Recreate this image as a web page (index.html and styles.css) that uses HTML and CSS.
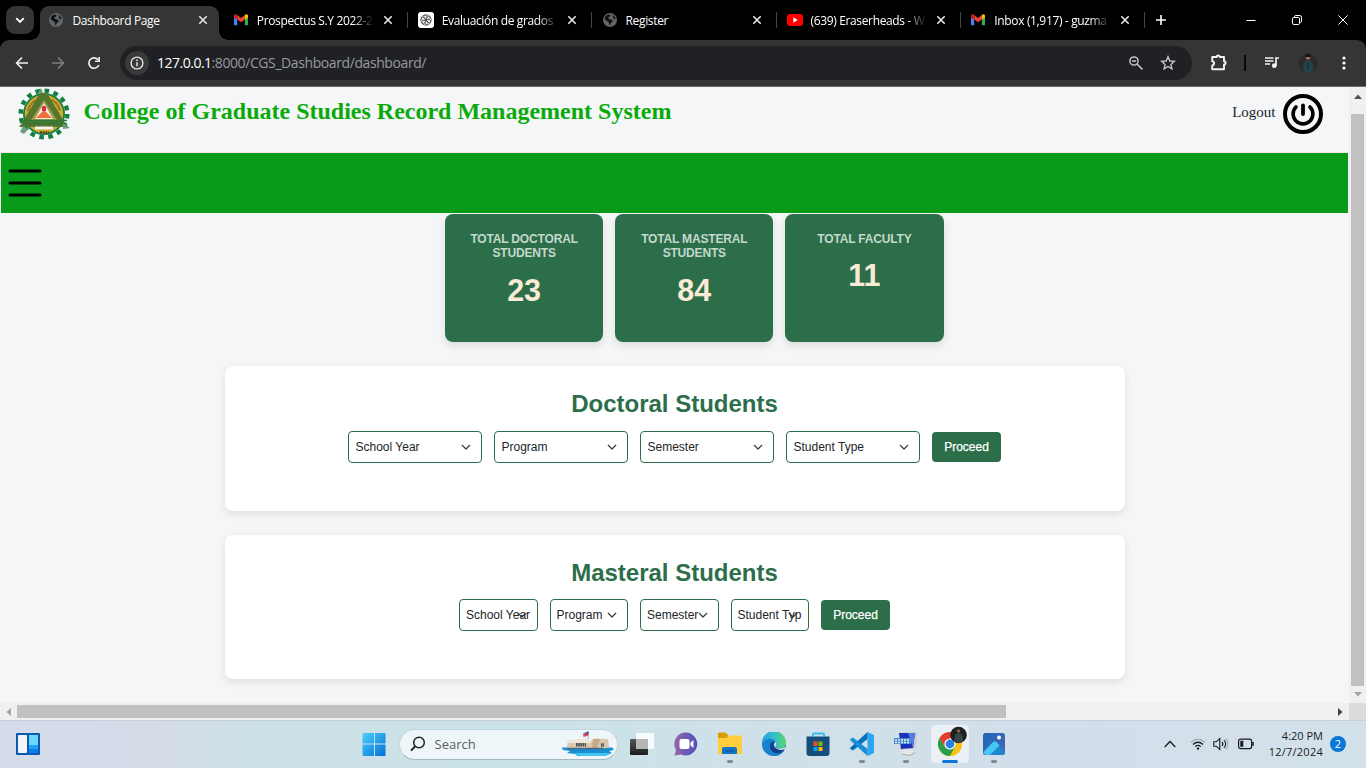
FILE: index.html
```html
<!DOCTYPE html>
<html lang="en">
<head>
<meta charset="utf-8">
<title>Dashboard Page</title>
<link rel="stylesheet" href="styles.css">
</head>
<body>
<svg class="defs" width="0" height="0">
  <defs>
    <symbol id="i-x" viewBox="0 0 10 10"><path d="M1.3 1.3l7.4 7.4M8.7 1.3L1.3 8.7" fill="none" stroke="#e8e8e8" stroke-width="1.6"/></symbol>
    <symbol id="i-gmail" viewBox="0 0 14 12"><path d="M0 2v9.2h3.2V4.5L0 2z" fill="#4285f4"/><path d="M14 2v9.2h-3.2V4.5L14 2z" fill="#34a853"/><path d="M3.2 1v4.5L7 8.3l3.8-2.8V1L7 3.9z" fill="#ea4335"/><path d="M0 1.8v1.7l3.2 2.2V1.2L2.4.6C1.400 0 0 .6 0 1.800z" fill="#c5221f"/><path d="M14 1.800v1.700l-3.200 2.200V1.200l.8-.6c1-.6 2.400 0 2.400 1.200z" fill="#fbbc04"/></symbol>
    <symbol id="i-globe" viewBox="0 0 14 14"><circle cx="7" cy="7" r="7" fill="#61656a"/><path d="M2 4.200C3 2.500 4.500 1.700 6 1.500l1.500.7-.7 1.600-2 .7 1.700 1.700 2.500.5.800 1.600-2.200 1.900-.6 2.200c-1-.4-1-1.700-.9-2.900L3.500 7.500 1.800 6.300zM9.200 1.900c1.800.6 3.200 2.300 3.300 4.200l-1.200.2-1.400-1.200.3-1.200z" fill="#111"/></symbol>
    <symbol id="i-chev" viewBox="0 0 10 10"><path d="M1.200 3.300L5 7l3.800-3.700" fill="none" stroke="#343a40" stroke-width="1.200" stroke-linecap="round" stroke-linejoin="round"/></symbol>
  </defs>
</svg>
<div class="screen">
  <div class="tabstrip">
    <div class="tabsearch"><svg width="12" height="12" viewBox="0 0 12 12"><path d="M2.200 4.200L6 8l3.800-3.800" fill="none" stroke="#fff" stroke-width="1.800"/></svg></div>
    <div class="tab active"><svg class="fav" width="14" height="14"><use href="#i-globe"/></svg><span class="tabname">Dashboard Page</span><svg width="10" height="10"><use href="#i-x"/></svg></div>
    <div class="tab"><svg class="fav" width="14" height="12"><use href="#i-gmail"/></svg><span class="tabname fade">Prospectus S.Y 2022-2</span><svg width="10" height="10"><use href="#i-x"/></svg><i class="sep"></i></div>
    <div class="tab"><svg class="fav" width="16" height="16" viewBox="0 0 16 16"><rect width="16" height="16" rx="3" fill="#fff"/><g fill="none" stroke="#444" stroke-width=".7"><ellipse cx="8" cy="5.200" rx="3.200" ry="2.500" transform="rotate(20 8 8)"/><ellipse cx="8" cy="5.200" rx="3.200" ry="2.500" transform="rotate(80 8 8)"/><ellipse cx="8" cy="5.200" rx="3.200" ry="2.500" transform="rotate(140 8 8)"/><ellipse cx="8" cy="5.200" rx="3.200" ry="2.500" transform="rotate(200 8 8)"/><ellipse cx="8" cy="5.200" rx="3.200" ry="2.500" transform="rotate(260 8 8)"/><ellipse cx="8" cy="5.200" rx="3.200" ry="2.500" transform="rotate(320 8 8)"/></g></svg><span class="tabname fade">Evaluación de grados</span><svg width="10" height="10"><use href="#i-x"/></svg><i class="sep"></i></div>
    <div class="tab"><svg class="fav" width="14" height="14"><use href="#i-globe"/></svg><span class="tabname">Register</span><svg width="10" height="10"><use href="#i-x"/></svg><i class="sep"></i></div>
    <div class="tab"><svg class="fav" width="16" height="12" viewBox="0 0 16 12"><rect width="16" height="12" rx="3" fill="#f00"/><path d="M6.300 3.300v5.400L10.700 6z" fill="#fff"/></svg><span class="tabname fade">(639) Eraserheads - W</span><svg width="10" height="10"><use href="#i-x"/></svg><i class="sep"></i></div>
    <div class="tab"><svg class="fav" width="14" height="12"><use href="#i-gmail"/></svg><span class="tabname fade">Inbox (1,917) - guzma</span><svg width="10" height="10"><use href="#i-x"/></svg><i class="sep"></i></div>
    <svg class="plus" width="12" height="12" viewBox="0 0 12 12"><path d="M6 1v10M1 6h10" stroke="#fff" stroke-width="1.600"/></svg>
    <div class="winbtns">
      <svg width="10" height="10" viewBox="0 0 10 10"><path d="M.5 5.500h9" stroke="#fff"/></svg>
      <svg width="10" height="10" viewBox="0 0 10 10"><rect x=".5" y="2.500" width="7" height="7" rx="1.300" fill="none" stroke="#fff"/><path d="M2.500 2V1.800Q2.500.5 3.800.5h4Q9.500.5 9.500 2.200v4Q9.500 7.500 8.200 7.500H8" fill="none" stroke="#fff"/></svg>
      <svg width="10" height="10" viewBox="0 0 10 10"><path d="M.4.4l9.200 9.200M9.600.4L.4 9.600" stroke="#fff"/></svg>
    </div>
  </div>
  <div class="toolbar">
    <svg width="36" height="16" viewBox="-18 -8 36 16"><path d="M6 0H-5M0-5.500L-5.400 0 0 5.500" fill="none" stroke="#f0f0f0" stroke-width="1.600"/></svg>
    <svg width="36" height="16" viewBox="-18 -8 36 16"><path d="M-6 0H5M0-5.500L5.400 0 0 5.500" fill="none" stroke="#7d7d7d" stroke-width="1.600"/></svg>
    <svg width="36" height="16" viewBox="-18 -8 36 16"><path d="M4.900 2A5.200 5.200 0 1 1 4.300-3" fill="none" stroke="#f0f0f0" stroke-width="1.700"/><path d="M6-6v5H1V-2.400L4.400-2.400V-6z" fill="#f0f0f0"/></svg>
    <div class="omnibox">
      <span class="info"><svg width="14" height="14" viewBox="0 0 14 14"><circle cx="7" cy="7" r="5.900" fill="none" stroke="#e3e3e3" stroke-width="1.400"/><path d="M7 6.300v4M7 3.600v1.500" stroke="#e3e3e3" stroke-width="1.500"/></svg></span>
      <span class="url"><b>127.0.0.1</b>:8000/CGS_Dashboard/dashboard/</span>
      <svg width="32" height="16" viewBox="-16 -8 32 16"><g fill="none" stroke="#c4c6ca" stroke-width="1.500"><circle cx="-2" cy="-2" r="4.100"/><path d="M1 1l5.400 5.400M-4-2h4"/></g></svg>
      <svg width="32" height="16" viewBox="-16 -8 32 16"><path d="M0-6.200L1.800-2 6.300-1.600 2.900 1.400 3.900 5.900 0 3.500-3.900 5.900-2.900 1.400-6.300-1.600-1.800-2z" fill="none" stroke="#c4c6ca" stroke-width="1.400"/></svg>
    </div>
    <svg class="puzzle" width="18" height="18" viewBox="-9 -9 18 18"><path d="M-6.800-6H-2.300A1.500 1.500 0 0 1 .7-6H5V-1.700A1.500 1.500 0 0 1 5 1.500V6.300H-6.800V2.500C-4.300 2.300-4.300-1.600-6.800-1.800z" fill="none" stroke="#f2f2f2" stroke-width="1.900" stroke-linejoin="round"/></svg>
    <i class="tdiv"></i>
    <svg class="list" width="16" height="14" viewBox="0 0 16 14"><path d="M1 2h8.500M1 5h8.500M1 8h5M12 9.500V2h3" fill="none" stroke="#f2f2f2" stroke-width="1.700"/><circle cx="10.300" cy="9.700" r="2.400" fill="#f2f2f2"/></svg>
    <svg class="me" width="20" height="20" viewBox="0 0 20 20"><circle cx="10" cy="10" r="9.500" fill="#292a2c"/><path d="M5 17l.5-6q1-3 4.500-3.500 4 .5 4.600 3.500l.6 6-3 3h-4z" fill="#25434b"/><circle cx="10" cy="4.500" r="2.300" fill="#a06d5c"/><path d="M7.300 4q.2-3 2.700-3t2.700 3z" fill="#111"/><path d="M10 9v7" stroke="#122027"/></svg>
    <svg class="dots" width="4" height="14" viewBox="0 0 4 14"><g fill="#fff"><circle cx="2" cy="2" r="1.600"/><circle cx="2" cy="7" r="1.600"/><circle cx="2" cy="12" r="1.600"/></g></svg>
  </div>

  <div class="view">
    <main class="page">
      <header class="head">
        <svg class="logo" width="52" height="54" viewBox="-26 -27 52 54">
          <circle r="21" fill="#128040"/><circle r="23.300" fill="none" stroke="#128040" stroke-width="4.500" stroke-dasharray="4.570 4.570"/>
          <circle r="15" fill="none" stroke="#d4a82b" stroke-width="8.500"/><circle r="11" fill="#eff2ef"/>
          <path d="M-4-21h7L21 9l3 4H-25l3-4z" fill="#55762e"/><path d="M0-14L-13 6H13z" fill="#a39c4a"/><path d="M0-11L-9 5H9z" fill="#f1eee8"/>
          <path d="M0-4L-8 4H8z" fill="#f06c39"/><path d="M-2-3v-4q2-2.500 4 0v4z" fill="#d62b36"/>
          <path d="M-23 6.500H23M-22 9.500H22" stroke="#2c7a37" stroke-width="1.400"/><path d="M-9 14h18" stroke="#eff2ef" stroke-width="3"/><path d="M-16-3A17 17 0 0 1-8-14M8-14A17 17 0 0 1 16-3" fill="none" stroke="#7a602a" stroke-width="2.200" stroke-dasharray="1.500 .8"/>
          <path d="M-4 18.500h9" stroke="#594520" stroke-width="2.400" stroke-dasharray="2 .7"/><path d="M-7-20l4-6 2 5zM-24 18l3-6 5 3-4 5zM19 9l7 5-7 1z" fill="#6d9c80"/>
        </svg>
        <h1>College of Graduate Studies Record Management System</h1>
        <span class="logout">Logout</span>
        <svg class="power" width="40" height="40" viewBox="-20 -20 40 40"><g fill="none" stroke="#000" stroke-linecap="round"><circle r="18" stroke-width="4"/><path d="M0-8.500V0" stroke-width="3.800"/><path d="M-7-7A9.900 9.900 0 1 0 7-7" stroke-width="3.600"/></g></svg>
      </header>
      <nav class="bar"><svg width="34" height="30" viewBox="0 0 34 30"><path d="M2 3h30M2 15h30M2 27h30" stroke="#000" stroke-width="3" stroke-linecap="round"/></svg></nav>
      <div class="cards">
        <div class="card"><h3>TOTAL DOCTORAL STUDENTS</h3><p>23</p></div>
        <div class="card"><h3>TOTAL MASTERAL STUDENTS</h3><p>84</p></div>
        <div class="card"><h3>TOTAL FACULTY</h3><p>11</p></div>
      </div>
      <section class="panel doctoral">
        <h2>Doctoral Students</h2>
        <div class="filters">
          <div class="select"><span>School Year</span><svg width="10" height="10"><use href="#i-chev"/></svg></div>
          <div class="select"><span>Program</span><svg width="10" height="10"><use href="#i-chev"/></svg></div>
          <div class="select"><span>Semester</span><svg width="10" height="10"><use href="#i-chev"/></svg></div>
          <div class="select"><span>Student Type</span><svg width="10" height="10"><use href="#i-chev"/></svg></div>
          <button class="go">Proceed</button>
        </div>
      </section>
      <section class="panel masteral">
        <h2>Masteral Students</h2>
        <div class="filters narrow">
          <div class="select"><span>School Year</span><svg width="10" height="10"><use href="#i-chev"/></svg></div>
          <div class="select"><span>Program</span><svg width="10" height="10"><use href="#i-chev"/></svg></div>
          <div class="select"><span>Semester</span><svg width="10" height="10"><use href="#i-chev"/></svg></div>
          <div class="select"><span>Student Typ</span><svg width="10" height="10"><use href="#i-chev"/></svg></div>
          <button class="go">Proceed</button>
        </div>
      </section>
    </main>
    <div class="vscroll"><svg width="8" height="5"><path d="M0 5l4-4.500L8 5z" fill="#505050"/></svg><i></i><svg width="8" height="5"><path d="M0 0l4 4.500L8 0z" fill="#a3a3a3"/></svg></div>
    <div class="hscroll"><svg width="5" height="8"><path d="M5 0L.5 4 5 8z" fill="#a3a3a3"/></svg><i></i><svg width="5" height="8"><path d="M0 0l4.500 4L0 8z" fill="#404040"/></svg></div>
    <div class="corner"></div>
  </div>

  <footer class="taskbar">
    <svg class="widgets" width="24" height="22" viewBox="0 0 24 22"><rect width="24" height="22" rx="1" fill="#0c5bb0"/><rect x="2" y="2" width="9" height="18" rx="1" fill="#f5f5f5"/><path d="M13 2h9v10h-9z" fill="#67d8ff"/><path d="M13 12h9v4h-9z" fill="#1ba4f4"/><path d="M13 16h9v4h-9z" fill="#087fe8"/></svg>
    <svg class="start" width="24" height="24" viewBox="0 0 24 24"><defs><linearGradient id="w" x1="0" y1="0" x2="1" y2="1"><stop stop-color="#4fcfff"/><stop offset="1" stop-color="#0070d6"/></linearGradient></defs><path d="M1.500 1H12v10.500H.5V2q0-1 1-1zM13 1h9.500q1 0 1 1v9.500H13zM.5 12.500H12V24H1.500q-1 0-1-1zM13 12.500h10.500V23q0 1-1 1H13z" fill="url(#w)"/></svg>
    <div class="search">
      <svg width="16" height="16" viewBox="0 0 16 16"><circle cx="9" cy="6.500" r="5.300" fill="none" stroke="#222" stroke-width="1.500"/><path d="M5 10.500L1 14.600" stroke="#222" stroke-width="2"/></svg>
      <span>Search</span>
      <svg class="ship" width="52" height="26" viewBox="0 0 52 26"><path d="M0 16.500h50l2 2-5 2 3 1.500-7 3H16l-3-2-8-1 3-2-7-1z" fill="#178fd2"/><path d="M12 22h36l-5 3H18z" fill="#43c6ee"/><path d="M5 16.500l1-7 16-1.500 7 2 3-2.500 14 .5 1 8-6 2H7z" fill="#d7c8ae"/><path d="M6 9.500l16-1.500 7 2v2H6z" fill="#efe7d8"/><path d="M31 8h7l-3 9h-5z" fill="#c4aa85"/><path d="M14 13.800h10M39 14h3" stroke="#414c59" stroke-width="3.600" stroke-dasharray="1.600 .6"/><path d="M5 17.500h37" stroke="#4c6780" stroke-width="1.300"/><path d="M26 8V.5" stroke="#999" stroke-width=".8"/><path d="M21 2.500l5.500-2V4.500l-5 1.500z" fill="#d74a5f"/><path d="M23.500 1.600l3-1.100v2.300l-3 .8z" fill="#345fb0"/></svg>
    </div>
    <div class="apps">
      <div class="app"><svg width="24" height="24" viewBox="0 0 24 24"><defs><linearGradient id="tv" x2="0" y2="1"><stop stop-color="#555"/><stop offset="1" stop-color="#1d1d1d"/></linearGradient></defs><rect x="0" y="7" width="18" height="16" rx="1" fill="url(#tv)"/><rect x="6" y="1" width="18" height="16" rx="1" fill="#fff" opacity=".85"/><path d="M6 7h12v10H6z" fill="#aaa" opacity=".8"/></svg></div>
      <div class="app"><svg width="24" height="24" viewBox="0 0 24 24"><defs><linearGradient id="ch" x2="1"><stop stop-color="#9567ac"/><stop offset="1" stop-color="#4e50b5"/></linearGradient></defs><path d="M12 .5A11.500 11.500 0 1 1 7 22.500L.5 23.500 2 18A11.500 11.500 0 0 1 12 .5z" fill="url(#ch)"/><rect x="5.500" y="7" width="10" height="10" rx="2" fill="#fff"/><path d="M16.500 10.500l3-2.500v8l-3-2.500z" fill="#fff"/></svg></div>
      <div class="app run"><svg width="24" height="24" viewBox="0 0 24 24"><path d="M0 2q0-1.500 1.500-1.500h6L10 3v5H0z" fill="#d89b00"/><path d="M0 6h8l3-2.500h12q1 0 1 1V22H0z" fill="#ffcd3e"/><path d="M4 22v-5q0-2 2-2h11q2 0 2 2v5z" fill="#1474c4"/><path d="M8 19h8" stroke="#074f8e"/></svg></div>
      <div class="app"><svg width="24" height="24" viewBox="0 0 24 24"><defs><linearGradient id="e1" x2="1"><stop stop-color="#24a4dc"/><stop offset=".6" stop-color="#35c1c6"/><stop offset="1" stop-color="#60d858"/></linearGradient></defs><circle cx="12" cy="12" r="12" fill="#1267b5"/><path d="M0 11A12 12 0 0 1 24 11q0 5.500-6 5.500-5 0-4-3.500c1-3-2-5-5-4-4 1-6 4-9 2z" fill="url(#e1)"/><path d="M0 12C2 7 9 4.500 13 9c-6-2-8 6-2 10 4 2.500 7 2 11 0-6 8-20 6-22-7z" fill="#1683d1"/><path d="M13 9c-3 2-2 7 4 8.500 3 .6 5-.5 5.500-.5-1.500 3.200-5.500 5-9.500 4-6-2-6-9-2-11z" fill="#123f88"/><path d="M13 10c2 1 1 3 .5 4 0 3 5 3.500 10.500 1v2l-1.500.3c-5 2-10.500-1-10.500-5z" fill="#d8e5ed"/></svg></div>
      <div class="app"><svg width="24" height="24" viewBox="0 0 24 24"><path d="M7 6V2.500Q7 1.500 8 1.500h9q1 0 1 1V6" fill="none" stroke="#38bdeb" stroke-width="2"/><path d="M.5 4.500h23v16.500q0 3-3 3h-17q-3 0-3-3z" fill="#174d7a"/><path d="M7 5V4h1.200v1zM17 5V4h1.200v1z" fill="#38bdeb"/><path d="M7.500 9.500h4V14h-4z" fill="#f25022"/><path d="M12.500 9.500h4V14h-4z" fill="#7fba00"/><path d="M7.500 15h4v4h-4z" fill="#00a4ef"/><path d="M12.500 15h4v4h-4z" fill="#ffb900"/></svg></div>
      <div class="app run"><svg width="24" height="24" viewBox="0 0 24 24"><path d="M17.500 0L24 3v18l-6.500 3z" fill="#2aa7ee"/><path d="M17.500 0v7L3 18.500.5 17q-.8-.8 0-1.500z" fill="#0870b8"/><path d="M17.500 24v-7L3 5.500.5 7q-.8.800 0 1.500z" fill="#148fd8"/></svg></div>
      <div class="app run"><svg width="24" height="24" viewBox="0 0 24 24"><path d="M5 .5L23.500 0 22 17 6 18z" fill="#cbcdd0"/><path d="M5 1l16 0-2 15-12 1z" fill="#1833ba"/><path d="M14 1h7l-2 15z" fill="#537be5"/><path d="M10 17h7l4 3-5 3.500-8-1.500-1-2z" fill="#e6e6e6"/><path d="M8 22l8 1.500 5-3" fill="none" stroke="#999" stroke-width=".8"/><rect y="6" width="17" height="6" fill="#4289ca"/><path d="M1 8h15M1 10.500h15" stroke="#e7f2fd" stroke-width="1.300" stroke-dasharray="2 1"/></svg></div>
      <div class="app current"><svg width="30" height="30" viewBox="-13 -18 30 30"><circle r="12" fill="#f9bd15"/><path d="M-10.400-6A12 12 0 0 1 10.400-6H0L-5 3z" fill="#e33b2e"/><path d="M-10.400-6A12 12 0 0 0 0 12L5.200 3h-10.400z" fill="#2a9e49"/><path d="M0 12A12 12 0 0 0 10.400-6H0L5.200 3z" fill="#fbc116"/><circle r="5.600" fill="#fff"/><circle r="4.400" fill="#2781e8"/><circle cx="8.500" cy="-9" r="8.300" fill="#1d2021"/><path d="M4-3l1-6 3-2 4 1 1 7-4 2z" fill="#38474c"/><circle cx="8.500" cy="-13" r="1.800" fill="#876353"/></svg></div>
      <div class="app run"><svg width="24" height="24" viewBox="0 0 24 24"><defs><linearGradient id="ph" x2="1" y2="1"><stop stop-color="#1868b9"/><stop offset="1" stop-color="#5265b1"/></linearGradient></defs><rect x="1" y="1" width="22" height="22" rx="2.500" fill="url(#ph)"/><path d="M12 12q2-2 4 0l7 8q0 3-3 3H9z" fill="#1f86cf"/><path d="M1.500 20L11 10q2-1.500 4 .5l2.500 3L8 23H4q-2.500-1-2.500-3z" fill="#45c8f5"/><circle cx="17" cy="5.500" r="2" fill="#fff"/></svg></div>
    </div>
    <div class="tray">
      <svg class="up" width="12" height="8" viewBox="0 0 12 8"><path d="M.7 7L6 1.500 11.300 7" fill="none" stroke="#1b1b1b" stroke-width="1.300"/></svg>
      <svg class="wifi" width="16" height="12" viewBox="0 0 16 12"><g fill="none" stroke="#1b1b1b" stroke-width="1.200"><path d="M1 4.500Q8-2 15 4.500" stroke="#a8b0b8"/><path d="M3 6.500q5-4.500 10 0M5.200 8.600q2.800-2.500 5.600 0"/></g><circle cx="8" cy="10.500" r="1.200" fill="#1b1b1b"/></svg>
      <svg class="vol" width="16" height="14" viewBox="0 0 16 14"><g fill="none" stroke="#1b1b1b" stroke-width="1.100"><path d="M.8 4.800h2.500L6.800 1.500v11L3.300 9.200H.8zM9 4.800q1.800 2.200 0 4.400M11 3q3.300 4 0 8"/><path d="M13 1.500q4 5.500 0 11" stroke="#9ea7b0"/></g></svg>
      <svg class="bat" width="16" height="12" viewBox="0 0 16 12"><rect x=".6" y="1.100" width="13" height="9.500" rx="2" fill="none" stroke="#1b1b1b" stroke-width="1.200"/><rect x="2.300" y="2.800" width="3" height="6" fill="#1b1b1b"/><path d="M15 4v3.800" stroke="#1b1b1b" stroke-width="1.600"/></svg>
      <div class="clock"><span>4:20 PM</span><span class="date">12/7/2024</span></div>
      <span class="badge">2</span>
    </div>
  </footer>
</div>
</body>
</html>
```
FILE: styles.css
```css
* { box-sizing: border-box; }
body { margin: 0; overflow: hidden; font-family: "Liberation Sans", Arial, sans-serif; }
h1, h2, h3, p { margin: 0; }
svg { display: block; flex: none; }
.defs { position: absolute; }
.screen { width: 1366px; height: 768px; display: grid; grid-template-rows: 40px 47px 633px 48px; background: #000; }

.tabstrip { display: flex; align-items: center; background: #000; padding-left: 6px; }
.tabsearch { width: 28px; height: 28px; margin-right: 6px; border-radius: 9px; background: #353535; display: grid; place-items: center; }
.tab { position: relative; width: 184.400px; flex: none; height: 40px; display: flex; align-items: center; padding: 0 16px 0 9.400px; color: #fff; font: 12px "Open Sans", sans-serif; }
.tab.active::before { content: ""; position: absolute; z-index: 0; left: 0; top: 6px; width: 179px; height: 34px; border-radius: 9px 9px 0 0; background: #353535; }
.tab.active::after { content: ""; position: absolute; left: -9px; bottom: 0; width: 197px; height: 9px; background: radial-gradient(circle at 0 0, transparent 8.500px, #353535 9px) left / 9px 9px no-repeat, radial-gradient(circle at 100% 0, transparent 8.500px, #353535 9px) right / 9px 9px no-repeat; }
.tab > svg, .tabname { position: relative; z-index: 1; }
.tabname { width: 120px; line-height: 18px; margin: 1px auto 0 9px; white-space: nowrap; letter-spacing: -0.350px; }
.fav[width="16"] { margin-right: -1.500px; }
.fade { -webkit-mask-image: linear-gradient(90deg, #000 80%, transparent 97%); mask-image: linear-gradient(90deg, #000 80%, transparent 97%); }
.sep { position: absolute; right: 1px; top: 12px; width: 1px; height: 16px; background: #444; }
.plus { margin-left: 8.500px; }
.winbtns { margin-left: auto; display: flex; gap: 36px; padding-right: 18px; }

.toolbar { display: flex; align-items: center; background: #353535; border-bottom: 1px solid #6a6a6a; border-radius: 9px 9px 0 0; padding-left: 4px; }
.omnibox { margin-left: 8px; width: 1072px; height: 34px; border-radius: 17px; background: #202124; display: flex; align-items: center; padding: 0 8px 0 5px; flex: none; }
.info { width: 24px; height: 24px; border-radius: 12px; background: #3a3a3b; display: grid; place-items: center; }
.url { margin: -1px auto 0 8px; color: #989a9e; font: 14px "Open Sans", sans-serif; letter-spacing: -0.410px; }
.url b { font-weight: 400; color: #fff; letter-spacing: -0.500px; }
.puzzle { margin-left: 18px; }
.tdiv { width: 2px; height: 16px; background: #0a0a0a; margin: 0 18px 0 16px; }
.me { margin: 0 24px 0 18px; }

.view { display: grid; grid-template-columns: 1349px 17px; grid-template-rows: 616px 17px; background: #f0f0f0; }
.page { background: #f4f6f8; overflow: hidden; }
.head { height: 66px; display: flex; align-items: flex-start; padding-left: 18px; border-bottom: 1px solid #f1e6e4; }
.head h1 { margin: 10px 0 0 13.500px; font: bold 24px/28px "Liberation Serif", serif; color: #0aaa0a; white-space: nowrap; }
.logout { margin: 16px 7.500px 0 auto; font: 15px/18px "Liberation Serif", serif; color: #212529; }
.power { margin: 7px 26px 0 0; }
.bar { height: 60px; margin: 0 1px; background: #089b1a; display: flex; align-items: center; padding-left: 7px; }
.cards { display: flex; gap: 12px; margin: 1px 0 0 445px; height: 128px; }
.card { width: 158.200px; background: #2c6e49; border-radius: 8px; padding: 18px 16px; text-align: center; box-shadow: 0 4px 8px rgba(0,0,0,.1); }
.card h3 { font-size: 12px; line-height: 14.400px; color: #c4d8cc; letter-spacing: -0.170px; }
.card p { margin-top: 10px; font-size: 30.500px; line-height: 38px; font-weight: bold; color: #faebd7; }
.panel { width: 900px; margin: 24px 0 0 225px; background: #fff; border-radius: 8px; box-shadow: 0 3px 8px rgba(0,0,0,.1); padding-top: 23px; text-align: center; }
.doctoral { height: 145px; }
.masteral { height: 144px; }
.panel h2 { font-size: 24px; line-height: 29px; color: #2c6e49; margin-right: 1px; }
.filters { display: flex; align-items: center; gap: 12px; margin: 13px 0 0 123px; }
.masteral .filters { margin: 12px 0 0 234px; }
.select { width: 134px; height: 32px; border: 1px solid #2c6e49; border-radius: 4px; display: flex; align-items: center; padding: 0 10px 0 6.500px; font-size: 12px; color: #212529; }
.select span { flex: 1; text-align: left; white-space: nowrap; width: 0; }
.narrow .select { width: 78.500px; padding-left: 6px; }
.go { width: 69px; height: 30px; border: 0; border-radius: 4px; background: #2c6e49; color: #fff; font: 12px "Liberation Sans", sans-serif; padding: 0; -webkit-text-stroke: 0.250px #fff; }
.vscroll { display: flex; flex-direction: column; align-items: center; padding: 7px 0 6px; }
.vscroll i { width: 13px; height: 572px; margin: 15px 0 auto; background: #c1c1c1; }
.hscroll { display: flex; align-items: center; padding: 0 6px; }
.hscroll i { width: 989px; height: 13px; margin: 0 auto 0 6px; background: #c1c1c1; }
.corner { background: #dcdcdc; }

.taskbar { display: flex; align-items: center; padding-bottom: 1px; border-top: 1px solid #c5d0da; background: linear-gradient(90deg, #d6dbea 0, #d4dce8 170px, #cce1e7 260px, #c9e3e8 540px, #d0e0e9 760px, #d3deea 1100px, #d2e1ea 100%); font-family: "Open Sans", sans-serif; }
.widgets { margin-left: 16px; }
.start { margin-left: 321.500px; }
.search { margin-left: 13px; width: 219px; height: 31px; border-radius: 16px; background: #eef6f9; border: 1px solid #c3d5dc; border-bottom-color: #a4b8bf; display: flex; align-items: center; padding: 0 3px 0 10px; font-size: 13px; color: #5a6165; }
.search span { margin: 0 auto 0 9px; }
.apps { display: flex; margin-left: 2px; }
.app { width: 44.100px; height: 46px; display: grid; place-items: center; position: relative; }
.run::after, .current::after { content: ""; position: absolute; bottom: 4px; left: 19px; width: 6px; height: 3px; border-radius: 2px; background: #808890; }
.current::before { content: ""; position: absolute; left: 3px; top: 4px; width: 38px; height: 38px; border-radius: 4px; background: #eaf0f6; }
.current::after { left: 14px; width: 16px; background: #0a78d7; }
.current svg { position: relative; top: -3px; left: 2px; }
.tray { margin-left: auto; display: flex; align-items: center; padding-right: 20px; }
.wifi { margin-left: 14px; }
.vol { margin-left: 7px; }
.bat { margin-left: 9px; }
.clock { width: 60px; margin: 0 7px 0 9px; display: flex; flex-direction: column; align-items: flex-end; font-size: 11px; line-height: 16px; color: #1b1b1b; white-space: nowrap; }
.date { letter-spacing: 0.250px; }
.badge { width: 16px; height: 16px; border-radius: 8px; background: #0a78d7; color: #fff; font-size: 11px; line-height: 16px; text-align: center; }
```
